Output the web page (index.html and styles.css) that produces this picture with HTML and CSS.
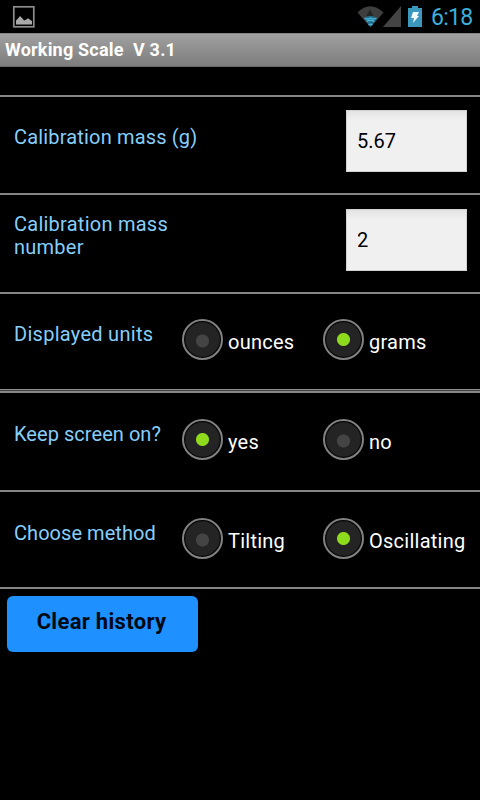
FILE: index.html
```html
<!DOCTYPE html>
<html lang="en">
<head>
<meta charset="utf-8">
<title>Working Scale</title>
<link rel="stylesheet" href="styles.css">
</head>
<body>
<div class="status">
  <svg class="picture" width="24" height="24" viewBox="0 0 24 24">
    <rect x="1.8" y="1.8" width="20" height="20" fill="none" stroke="#8c8c8c" stroke-width="1.7"/>
    <path d="M4 19.5V15.500l2-2L8 11l2.500 2.500L12 15.500l2-.8 2-1.500 2 1.500 2 1.300v3.500z" fill="#a9a9a9"/>
  </svg>
  <svg class="signal" width="46" height="24" viewBox="0 0 46 24">
    <path d="M.5 8.5Q13-4 26.500 8.500L13.500 23.500z" fill="#3e3e3e"/>
    <path d="M13 5l3.500 7h-7z" fill="#252525"/>
    <path d="M7 14.500Q13.500 9 20 14.500l-6.500 8z" fill="#206f8c"/>
    <path d="M7.500 14q2.500 2 6 0 3.500 2 6 0M9.500 17.500q4-2.500 8 0M11.500 20.500h4" fill="none" stroke="#49b5d9" stroke-width="1.300"/>
    <path d="M26 23L44 2v21z" fill="#444"/>
  </svg>
  <svg class="battery" width="14" height="21" viewBox="0 0 14 21">
    <path d="M0 2h4V0h6v2h4v19H0z" fill="#3b98bc"/>
    <path d="M5 6h6l-2 4h2l-6 7 1-5H3z" fill="#eefaff"/>
  </svg>
  <span class="clock">6:18</span>
</div>
<header class="title">Working Scale&nbsp; V 3.1</header>
<div class="spacer"></div>
<main>
  <section class="row mass">
    <label class="name" for="mass">Calibration mass (g)</label>
    <input class="field" id="mass" type="text" value="5.67">
  </section>
  <section class="row number">
    <label class="name" for="number">Calibration mass number</label>
    <input class="field" id="number" type="text" value="2">
  </section>
  <section class="row choice units">
    <span class="name">Displayed units</span>
    <div class="option"><span class="radio"></span><span class="text">ounces</span></div>
    <div class="option"><span class="radio on"></span><span class="text">grams</span></div>
  </section>
  <section class="row choice screen">
    <span class="name">Keep screen on?</span>
    <div class="option"><span class="radio on"></span><span class="text">yes</span></div>
    <div class="option"><span class="radio"></span><span class="text">no</span></div>
  </section>
  <section class="row choice method">
    <span class="name">Choose method</span>
    <div class="option"><span class="radio"></span><span class="text">Tilting</span></div>
    <div class="option"><span class="radio on"></span><span class="text">Oscillating</span></div>
  </section>
  <button class="clear" type="button">Clear history</button>
</main>
</body>
</html>
```
FILE: styles.css
```css
* { box-sizing: border-box; }
body {
  margin: 0;
  height: 800px;
  background: #000;
  color: #fff;
  font-family: Roboto, sans-serif;
  font-size: 20px;
  line-height: 23px;
  overflow: hidden;
}
.status {
  height: 33px;
  display: flex;
  align-items: flex-start;
  padding: 5px 8px 0 12px;
}
.signal { margin-left: auto; margin-top: -1px; }
.battery { margin: 1px 9px 0 5px; }
.clock {
  color: #3dafd9;
  font-size: 23px;
  letter-spacing: -.7px;
  line-height: 25px;
  width: 41px;
  white-space: nowrap;
}
.title {
  height: 34px;
  padding-left: 5px;
  background: linear-gradient(#a0a0a0, #7d7d7d);
  border-top: 1px solid #858585;
  border-bottom: 1px solid #666;
  font-size: 18px;
  font-weight: 700;
  letter-spacing: .2px;
  line-height: 32px;
  white-space: pre;
}
.spacer { height: 30px; border-bottom: 2px solid #858585; }
.row {
  display: flex;
  align-items: flex-start;
  padding-left: 14px;
  height: 99px;
  border-bottom: 2px solid #858585;
}
.row.mass { height: 98px; }
.row.method { height: 97px; }
.row.units {
  border-bottom: 0;
  background: linear-gradient(#8b8d8b 0 1px, #444 1px 2px, #858785 2px 4px) bottom / 100% 4px no-repeat;
}
.name {
  color: #87cefa;
  width: 190px;
  padding-top: 29px;
  letter-spacing: .17px;
}
.number .name { width: 170px; padding-top: 18px; letter-spacing: .25px; }
.choice .name { width: 168px; white-space: nowrap; letter-spacing: .05px; }
.units .name { letter-spacing: .28px; }
.screen .name, .method .name { padding-top: 30px; }
.field {
  margin: 13px 13px 0 auto;
  width: 121px;
  height: 62px;
  padding: 0 10px 0 11px;
  border: 1px solid #d2d2d2;
  border-radius: 0;
  outline: 0;
  background: linear-gradient(#e3e3e3, #f0f0f0 9px);
  color: #000;
  font: inherit;
  text-indent: -1px;
}
.number .field { margin-top: 14px; }
.option {
  display: flex;
  width: 141px;
  padding-top: 25px;
}
.screen .option, .method .option { padding-top: 26px; }
.radio {
  flex: none;
  width: 41px;
  height: 41px;
  margin-right: 5px;
  border: 2px solid #828282;
  border-radius: 50%;
  background:
    radial-gradient(circle at 50% 54%, #444 0 6px, transparent 7px),
    radial-gradient(circle at 50% 50%, #242424 0 16.500px, #050505 18px);
}
.radio.on {
  background:
    radial-gradient(circle at 50% 50%, #8edb1d 0 6px, transparent 7px),
    radial-gradient(circle at 50% 50%, #242424 0 16.500px, #050505 18px);
}
.text { padding-top: 12px; white-space: nowrap; letter-spacing: .25px; }
.clear {
  display: block;
  margin: 7px 0 0 7px;
  width: 191px;
  height: 56px;
  padding: 0 2px 5px 0;
  border: 0;
  border-radius: 6px;
  background: #1e90ff;
  color: #000814;
  font: 700 22px/26px Roboto, sans-serif;
  letter-spacing: .3px;
}
```
